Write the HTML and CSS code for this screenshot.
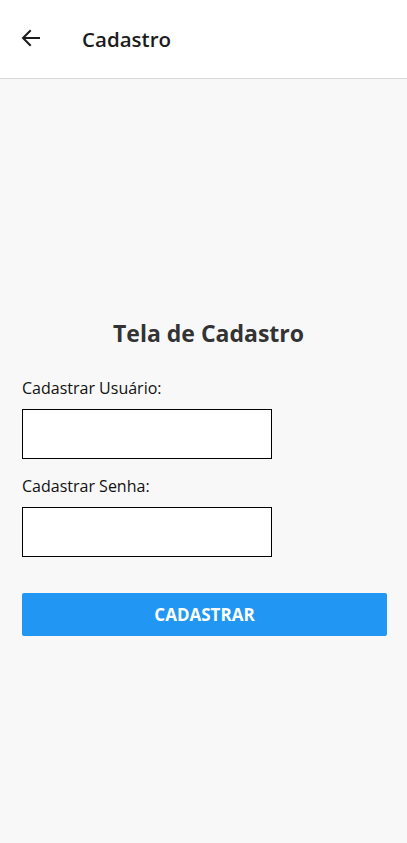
FILE: index.html
```html
<!DOCTYPE html>
<html lang="pt">
<head>
<meta charset="utf-8">
<link rel="stylesheet" href="styles.css">
</head>
<body>
<header class="appbar">
  <button class="back" aria-label="Voltar">
    <svg width="24" height="24" viewBox="0 0 24 24"><path d="M20 12H4.5M11 5l-7 7 7 7" fill="none" stroke="#1c1c1c" stroke-width="2" stroke-linecap="square" stroke-linejoin="miter"/></svg>
  </button>
  <h1 class="appbar-title">Cadastro</h1>
</header>
<main class="screen">
  <h2 class="form-title">Tela de Cadastro</h2>
  <form class="form">
    <label class="field-label">Cadastrar Usuário:</label>
    <input class="field-input" type="text">
    <label class="field-label">Cadastrar Senha:</label>
    <input class="field-input" type="password">
    <button class="submit" type="button">CADASTRAR</button>
  </form>
</main>
</body>
</html>
```
FILE: styles.css
```css
* { box-sizing: border-box; }
html, body { margin: 0; height: 100%; }
body {
  font-family: "Open Sans", "Noto Sans", sans-serif;
  background: #f8f8f8;
  color: #1c1c1c;
  display: flex;
  flex-direction: column;
}
.appbar {
  height: 79px;
  background: #fff;
  border-bottom: 1px solid #d8d8d8;
  display: flex;
  align-items: center;
  padding-left: 17px;
}
.back {
  border: 0;
  background: none;
  padding: 0;
  width: 28px;
  height: 28px;
  display: flex;
  align-items: center;
  justify-content: center;
  margin-top: -2px;
}
.appbar-title {
  margin: 0 0 0 37px;
  font-size: 20.5px;
  font-weight: 600;
}
.screen {
  flex: 1;
  padding: 236px 20px 0 22px;
}
.form-title {
  margin: 0;
  text-align: center;
  font-size: 23px;
  font-weight: 700;
  color: #333;
  padding-left: 8px;
  line-height: 36px;
}
.form {
  display: flex;
  flex-direction: column;
  align-items: flex-start;
  margin-top: 26px;
}
.field-label {
  font-size: 16px;
  line-height: 22px;
  color: #111;
}
.field-input {
  width: 250px;
  height: 50px;
  border: 1px solid #000;
  background: #fff;
  margin: 10px 0 16px;
  font: inherit;
}
.submit {
  width: 365px;
  height: 43px;
  margin-top: 20px;
  border: 0;
  border-radius: 2px;
  background: #2196f3;
  color: #fff;
  font-family: inherit;
  font-size: 17px;
  font-weight: 700;
}
```
